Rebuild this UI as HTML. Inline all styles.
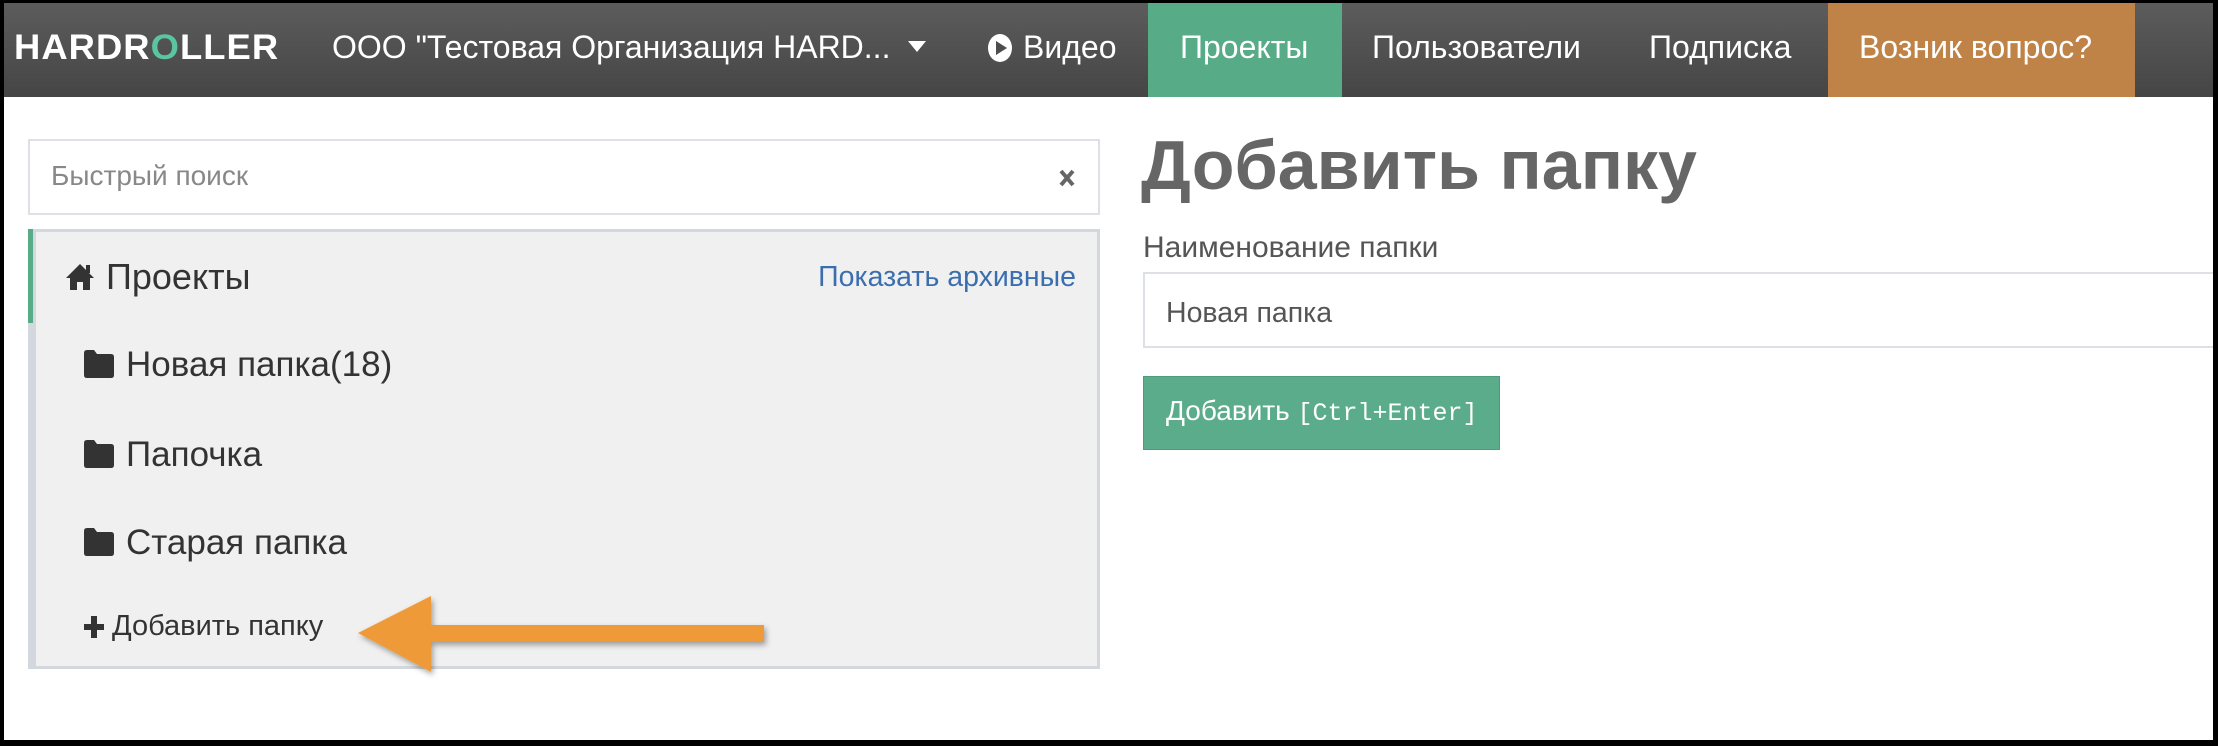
<!DOCTYPE html>
<html><head><meta charset="utf-8"><style>
*{margin:0;padding:0;box-sizing:border-box}
body{width:2218px;height:746px;background:#000;position:relative;overflow:hidden;font-family:"Liberation Sans",sans-serif}
#page{position:absolute;left:4px;top:3px;width:2209px;height:737px;background:#fff;overflow:hidden}
.a{position:absolute;white-space:nowrap}
#nav{position:absolute;left:0;top:0;width:2209px;height:94px;background:linear-gradient(#5c5c5c,#454545)}
.nt{color:#fff;font-size:32px;top:26px}
</style></head><body>
<div id="page">
<div id="nav"></div>
<div class="a" style="left:10px;top:25px;color:#fff;font-weight:bold;font-size:35px;letter-spacing:1px;transform:scaleX(1.04);transform-origin:left">HARDR<span style="color:#5bc4a0">O</span>LLER</div>
<div class="a nt" style="left:328px">ООО "Тестовая Организация HARD...</div>
<svg class="a" style="left:904px;top:38px" width="18" height="12"><path d="M0 0H18L9 11Z" fill="#fff"/></svg>
<svg class="a" style="left:982px;top:30px" width="28" height="30"><ellipse cx="14" cy="15" rx="12" ry="14" fill="#fff"/><path d="M10 8L21 15L10 22Z" fill="#4d4d4d"/></svg>
<div class="a nt" style="left:1019px">Видео</div>
<div class="a" style="left:1144px;top:0;width:194px;height:94px;background:#57ab87"></div>
<div class="a nt" style="left:1176px">Проекты</div>
<div class="a nt" style="left:1368px">Пользователи</div>
<div class="a nt" style="left:1645px">Подписка</div>
<div class="a" style="left:1824px;top:0;width:307px;height:94px;background:#bf8347"></div>
<div class="a nt" style="left:1855px">Возник вопрос?</div>

<div class="a" style="left:24px;top:136px;width:1072px;height:76px;border:2px solid #dde1e6"></div>
<div class="a" style="left:47px;top:157px;font-size:28px;color:#888">Быстрый поиск</div>
<svg class="a" style="left:1055px;top:166px" width="16" height="18"><path d="M2 2L14 16M14 2L2 16" stroke="#666" stroke-width="4"/></svg>

<div class="a" style="left:24px;top:226px;width:1072px;height:440px;background:#f0f0f0;border:3px solid #d3d8de;border-left:8px solid #d3d8de"></div>
<div class="a" style="left:24px;top:226px;width:5px;height:94px;background:#57ab87"></div>
<svg class="a" style="left:61px;top:260px" width="30" height="28"><path d="M15 1L1 15H5V27H12V19H18V27H25V15H29Z" fill="#333"/><rect x="21" y="2" width="4" height="8" fill="#333"/></svg>
<div class="a" style="left:102px;top:253px;font-size:36px;color:#333">Проекты</div>
<div class="a" style="right:1137px;top:258px;font-size:28.5px;color:#3b6eae">Показать архивные</div>
<svg class="a" style="left:80px;top:347px" width="30" height="28"><path d="M0 3Q0 0 3 0H10L13 4H27Q30 4 30 7V25Q30 28 27 28H3Q0 28 0 25Z" fill="#333"/></svg>
<div class="a" style="left:122px;top:342px;font-size:35px;color:#333">Новая папка(18)</div>
<svg class="a" style="left:80px;top:437px" width="30" height="28"><path d="M0 3Q0 0 3 0H10L13 4H27Q30 4 30 7V25Q30 28 27 28H3Q0 28 0 25Z" fill="#333"/></svg>
<div class="a" style="left:122px;top:432px;font-size:35px;color:#333">Папочка</div>
<svg class="a" style="left:80px;top:525px" width="30" height="28"><path d="M0 3Q0 0 3 0H10L13 4H27Q30 4 30 7V25Q30 28 27 28H3Q0 28 0 25Z" fill="#333"/></svg>
<div class="a" style="left:122px;top:520px;font-size:35px;color:#333">Старая папка</div>
<svg class="a" style="left:80px;top:613px" width="20" height="22"><path d="M7 0H13V8H20V14H13V22H7V14H0V8H7Z" fill="#333"/></svg>
<div class="a" style="left:108px;top:607px;font-size:29px;color:#333">Добавить папку</div>
<svg class="a" style="left:340px;top:585px" width="440" height="100"><defs><filter id="s"><feDropShadow dx="2" dy="3" stdDeviation="3" flood-opacity="0.35"/></filter></defs><path d="M14 45L87 8V37H420V54H87V84Z" fill="#ef9a38" filter="url(#s)"/></svg>

<div class="a" style="left:1137px;top:122px;font-size:70px;font-weight:bold;color:#666">Добавить папку</div>
<div class="a" style="left:1139px;top:228px;font-size:30px;color:#555">Наименование папки</div>
<div class="a" style="left:1139px;top:269px;width:1080px;height:76px;border:2px solid #dde1e6"></div>
<div class="a" style="left:1162px;top:294px;font-size:28.5px;color:#555">Новая папка</div>
<div class="a" style="left:1139px;top:373px;width:357px;height:74px;background:#5aac8a;border:1px solid #4f9c7c"></div>
<div class="a" style="left:1162px;top:392px;font-size:28px;color:#fff">Добавить <span style="font-family:'Liberation Mono',monospace;font-size:25px">[Ctrl+Enter]</span></div>
</div>
</body></html>
